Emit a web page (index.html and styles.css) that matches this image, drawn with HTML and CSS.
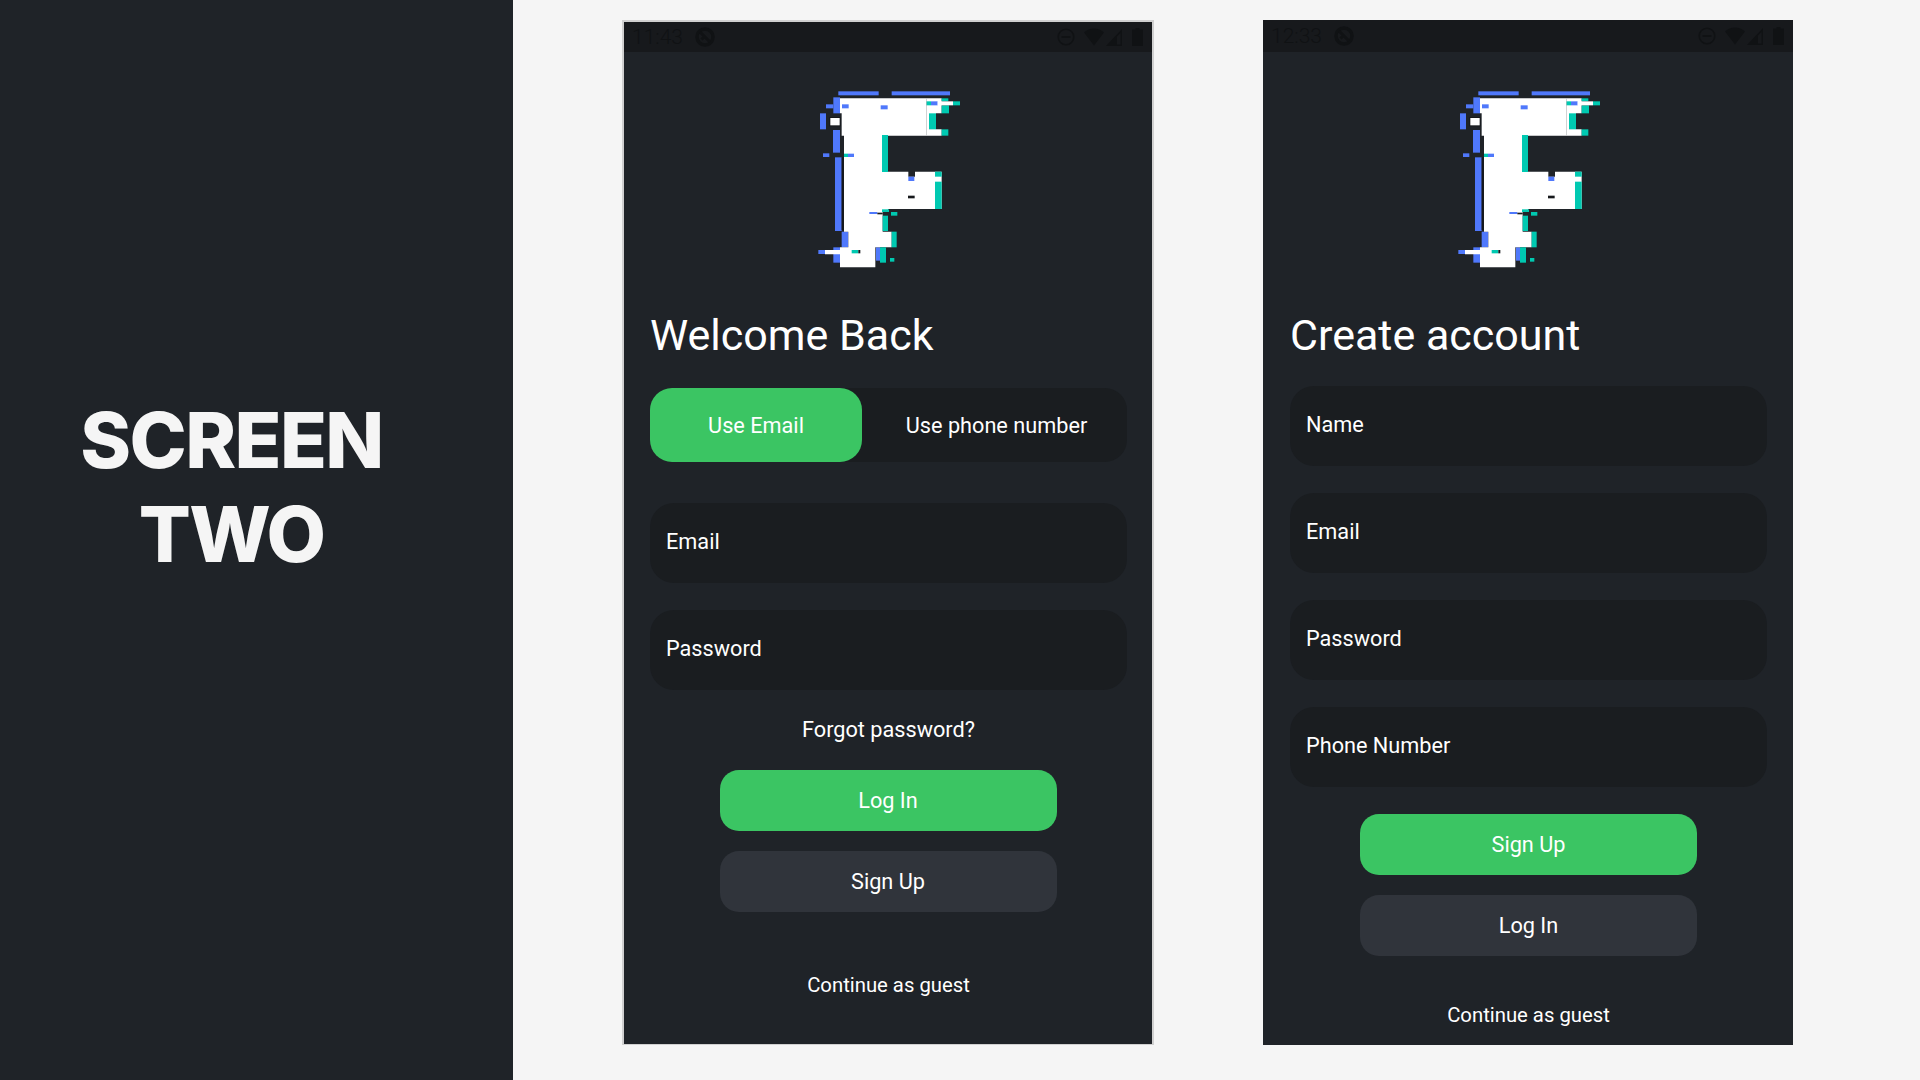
FILE: index.html
```html
<!DOCTYPE html>
<html lang="en">
<head>
    <meta charset="UTF-8">
    <meta name="viewport" content="width=device-width, initial-scale=1.0">
    <title>Screen Two</title>
    <link rel="stylesheet" href="styles.css">
</head>
<body>
    <!-- logo drawn once, reused in both phones -->
    <svg class="defs" width="0" height="0">
        <symbol id="logo" viewBox="0 0 600 630">
            <g fill="#4f78fb">
                <rect x="145" y="64" width="121" height="12"/>
                <rect x="305" y="64" width="175" height="12"/>
                <rect x="130" y="82" width="20" height="48"/>
                <rect x="108" y="103" width="22" height="12"/>
                <rect x="90" y="130" width="18" height="48"/>
                <rect x="129" y="180" width="21" height="68"/>
                <rect x="99" y="250" width="19" height="11"/>
                <rect x="135" y="262" width="20" height="221"/>
                <rect x="155" y="485" width="20" height="47"/>
                <rect x="130" y="532" width="20" height="46"/>
                <rect x="85" y="540" width="20" height="12"/>
                <rect x="258" y="532" width="12" height="40"/>
            </g>
            <path fill="#fff" d="M150 85H455V130H438V178H455V197H294V305H355V320H375V305H455V417H294V426H278V485H305V532H256V592H150V553H105V540H150V532H175V485H162V262H162V197H155V130H150Z"/>
            <g fill="#00c9b1">
                <rect x="276" y="195" width="18" height="111"/>
                <rect x="417" y="130" width="21" height="48"/>
                <rect x="455" y="178" width="20" height="19"/>
                <rect x="455" y="85" width="20" height="9"/>
                <rect x="455" y="106" width="22" height="24"/>
                <rect x="408" y="94" width="15" height="12"/>
                <rect x="489" y="94" width="21" height="12"/>
                <rect x="435" y="305" width="20" height="15"/>
                <rect x="435" y="335" width="20" height="82"/>
                <rect x="276" y="418" width="21" height="8"/>
                <rect x="303" y="426" width="19" height="11"/>
                <rect x="278" y="437" width="16" height="46"/>
                <rect x="305" y="485" width="15" height="47"/>
                <rect x="270" y="532" width="18" height="46"/>
                <rect x="300" y="564" width="13" height="11"/>
                <rect x="185" y="540" width="20" height="10"/>
                <rect x="162" y="251" width="12" height="10"/>
            </g>
            <g fill="#4f78fb">
                <rect x="156" y="103" width="20" height="12"/>
                <rect x="272" y="106" width="21" height="12"/>
                <rect x="423" y="94" width="20" height="12"/>
                <rect x="174" y="251" width="18" height="10"/>
                <rect x="355" y="320" width="18" height="13"/>
                <rect x="238" y="426" width="24" height="6"/>
            </g>
            <rect x="443" y="94" width="46" height="12" fill="#fff"/>
            <rect x="408" y="85" width="2" height="112" fill="#b9bcbe"/>
            <rect x="118" y="141" width="34" height="28" fill="#16181b"/>
            <rect x="121" y="144" width="28" height="22" fill="#fff"/>
            <g fill="#16181b">
                <rect x="155" y="262" width="6" height="218"/>
                <rect x="354" y="377" width="20" height="8"/>
                <rect x="262" y="428" width="16" height="5"/>
                <rect x="205" y="540" width="6" height="10"/>
            </g>
        </symbol>
        <!-- status bar icons -->
        <symbol id="dataSaver" viewBox="0 0 20 20">
            <circle cx="10" cy="10" r="8" fill="none" stroke="currentColor" stroke-width="3.500"/>
            <path d="M5 5 15 15M6.500 12.500l3.500-3.500" fill="none" stroke="currentColor" stroke-width="3"/>
        </symbol>
        <symbol id="dnd" viewBox="0 0 18 18">
            <circle cx="9" cy="9" r="7.800" fill="none" stroke="currentColor" stroke-width="1.600"/>
            <rect x="4.500" y="8.100" width="9" height="1.800" fill="currentColor"/>
        </symbol>
        <symbol id="wifi" viewBox="0 0 20 18">
            <path d="M0 4.500C5.500-1 14.500-1 20 4.500L10 17.500Z" fill="currentColor"/>
        </symbol>
        <symbol id="signal" viewBox="0 0 16 17">
            <path d="M16 0V17H0ZM14.500 4 11 7.500V15.500H14.500Z" fill="currentColor" fill-rule="evenodd"/>
        </symbol>
        <symbol id="battery" viewBox="0 0 11 18">
            <path d="M3.500 0H7.500V1.500H11V18H0V1.500H3.500Z" fill="currentColor"/>
        </symbol>
    </svg>

    <div class="page">
        <!-- left side title -->
        <aside class="sidebar">
            <h1>SCREEN<br>TWO</h1>
        </aside>

        <main class="screens">
            <!-- login phone -->
            <section class="phone phoneBorder">
                <div class="statusBar">
                    <span class="time">11:43</span>
                    <svg class="iconSaver"><use href="#dataSaver"/></svg>
                    <div class="statusRight">
                        <svg class="iconDnd"><use href="#dnd"/></svg>
                        <svg class="iconWifi"><use href="#wifi"/></svg>
                        <svg class="iconSignal"><use href="#signal"/></svg>
                        <svg class="iconBattery"><use href="#battery"/></svg>
                    </div>
                </div>
                <svg class="logo"><use href="#logo"/></svg>
                <div class="content loginContent">
                    <h2>Welcome Back</h2>
                    <div class="toggle">
                        <div class="toggleItem active">Use Email</div>
                        <div class="toggleItem">Use phone number</div>
                    </div>
                    <div class="fields loginFields">
                        <div class="field">Email</div>
                        <div class="field">Password</div>
                    </div>
                    <p class="forgot">Forgot password?</p>
                    <div class="actions loginActions">
                        <div class="btn green">Log In</div>
                        <div class="btn dark">Sign Up</div>
                    </div>
                    <p class="guest loginGuest">Continue as guest</p>
                </div>
            </section>

            <!-- sign up phone -->
            <section class="phone">
                <div class="statusBar">
                    <span class="time">12:33</span>
                    <svg class="iconSaver"><use href="#dataSaver"/></svg>
                    <div class="statusRight">
                        <svg class="iconDnd"><use href="#dnd"/></svg>
                        <svg class="iconWifi"><use href="#wifi"/></svg>
                        <svg class="iconSignal"><use href="#signal"/></svg>
                        <svg class="iconBattery"><use href="#battery"/></svg>
                    </div>
                </div>
                <svg class="logo"><use href="#logo"/></svg>
                <div class="content signupContent">
                    <h2>Create account</h2>
                    <div class="fields">
                        <div class="field">Name</div>
                        <div class="field">Email</div>
                        <div class="field">Password</div>
                        <div class="field">Phone Number</div>
                    </div>
                    <div class="actions">
                        <div class="btn green">Sign Up</div>
                        <div class="btn dark">Log In</div>
                    </div>
                    <p class="guest signupGuest">Continue as guest</p>
                </div>
            </section>
        </main>
    </div>
</body>
</html>
```

FILE: styles.css
```css
* {
    padding: 0px;
    margin: 0px;
    box-sizing: border-box;
}
body {
    background-color: #f5f5f5;
    font-family: Roboto, "Liberation Sans", sans-serif;
    color: #fff;
    overflow: hidden;
}
.defs {
    position: absolute;
}
.page {
    display: flex;
    height: 1080px;
}
.sidebar {
    width: 513px;
    background-color: #1f2328;
    padding-top: 393px;
    padding-right: 50px;
}
.sidebar h1 {
    font-family: Inter, sans-serif;
    font-size: 77px;
    font-weight: 800;
    line-height: 94px;
    letter-spacing: -1.600px;
    text-align: center;
    color: #f5f5f5;
}

.screens {
    display: flex;
    gap: 110px;
    padding: 20px 0 0 110px;
}
.phone {
    width: 530px;
    height: 1025px;
    background-color: #1f2328;
    overflow: hidden;
}
.phoneBorder {
    width: 532px;
    border: 2px solid #d0d0d0;
    border-bottom-width: 1px;
    margin-left: -1px;
    margin-right: -1px;
}

.statusBar {
    height: 30px;
    background-color: #17191c;
    color: #101214;
    display: flex;
    align-items: center;
    padding: 0 9px 0 8px;
}
.phone:not(.phoneBorder) .statusBar {
    height: 32px;
}
.time {
    font-size: 21px;
    font-weight: 300;
    width: 63px;
}
.iconSaver {
    width: 20px;
    height: 20px;
}
.statusRight {
    margin-left: auto;
    display: flex;
    align-items: center;
    gap: 9px;
}
.iconDnd {
    width: 18px;
    height: 18px;
}
.iconWifi {
    width: 20px;
    height: 18px;
}
.iconSignal {
    width: 16px;
    height: 17px;
    margin-left: -7px;
}
.iconBattery {
    width: 11px;
    height: 18px;
    margin-left: 1px;
}

.logo {
    display: block;
    width: 200px;
    height: 210px;
    margin: 18px auto 0;
    position: relative;
    left: 2px;
}
.loginContent {
    padding: 0 25px 0 26px;
}
.signupContent {
    padding: 0 26px 0 27px;
}
h2 {
    font-size: 43px;
    font-weight: 400;
    line-height: 50px;
    margin-top: 30px;
}
.toggle {
    display: flex;
    height: 74px;
    margin-top: 28px;
    border-radius: 22px;
    background-color: #1a1d20;
}
.toggleItem {
    flex: 1;
    display: flex;
    align-items: center;
    justify-content: center;
    padding-left: 4px;
    font-size: 21.700px;
    border-radius: 22px;
}
.toggleItem.active {
    flex: none;
    width: 212px;
    padding-left: 0;
    background-color: #3bc563;
}
.fields {
    display: flex;
    flex-direction: column;
    gap: 27px;
    margin-top: 26px;
}
.loginFields {
    margin-top: 41px;
}
.field {
    height: 80px;
    display: flex;
    align-items: center;
    padding: 0 0 3px 16px;
    font-size: 21.700px;
    border-radius: 24px;
    background-color: #1a1d20;
}
.forgot {
    font-size: 21.700px;
    line-height: 26px;
    text-align: center;
    margin-top: 27px;
}
.actions {
    display: flex;
    flex-direction: column;
    align-items: center;
    gap: 20px;
    margin-top: 27px;
}
.loginActions {
    margin-right: 1px;
}
.btn {
    width: 337px;
    height: 61px;
    display: flex;
    align-items: center;
    justify-content: center;
    font-size: 21.700px;
    border-radius: 19px;
}
.green {
    background-color: #3bc563;
}
.dark {
    background-color: #30343b;
}
.guest {
    font-size: 20.300px;
    line-height: 24px;
    text-align: center;
}
.loginGuest {
    margin-top: 61px;
}
.signupGuest {
    margin-top: 47px;
}
```
